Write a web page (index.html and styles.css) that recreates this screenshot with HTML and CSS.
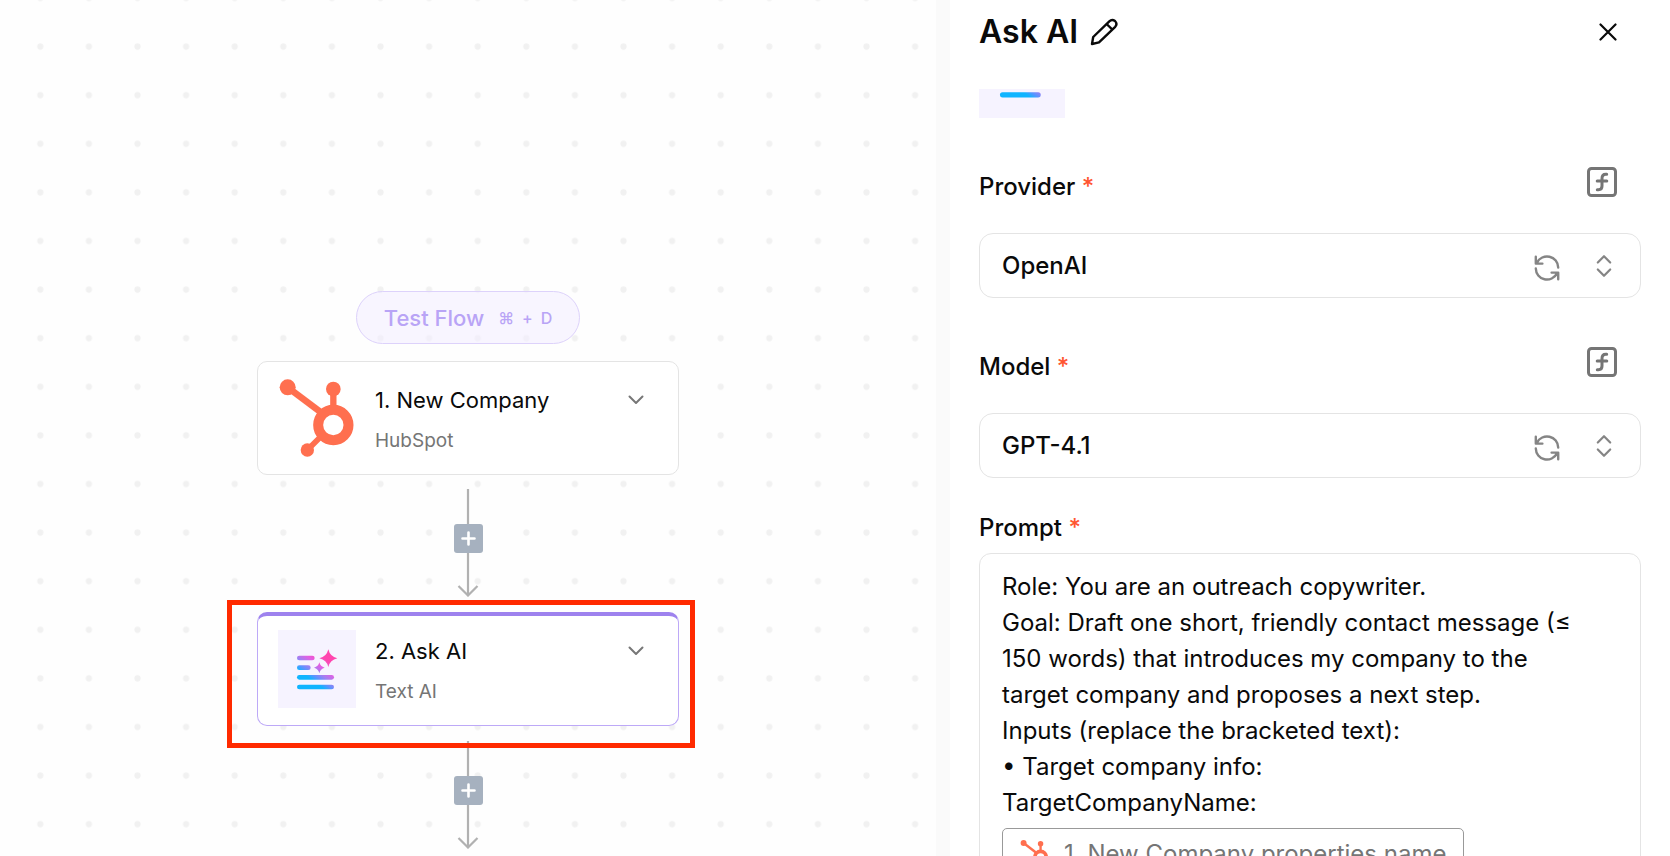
FILE: index.html
```html
<!DOCTYPE html>
<html lang="en">
<head>
  <meta charset="UTF-8" />
  <meta name="viewport" content="width=device-width, initial-scale=1.0"/>
  <title>Flow Builder</title>
  <link rel="stylesheet" href="styles.css">
</head>
<body>
  <!-- Shared icons -->
  <svg class="icon-defs" width="0" height="0" aria-hidden="true">
    <defs>
      <linearGradient id="ai-gradient" gradientUnits="userSpaceOnUse" x1="104" y1="162" x2="149" y2="101">
        <stop offset="0" stop-color="#10b4ff"/>
        <stop offset="0.18" stop-color="#5b93ff"/>
        <stop offset="0.4" stop-color="#a57df0"/>
        <stop offset="0.65" stop-color="#e35fe3"/>
        <stop offset="1" stop-color="#ff45ae"/>
      </linearGradient>
      <symbol id="hubspot" viewBox="24 26 234 234">
        <g fill="none" stroke="#ff6f4f">
          <path d="M53 51 L150 124" stroke-width="20"/>
          <path d="M190 57 V110" stroke-width="19"/>
          <path d="M112 239 L152 199" stroke-width="17"/>
          <circle cx="190" cy="164" r="45.5" stroke-width="30"/>
        </g>
        <g fill="#ff6f4f">
          <circle cx="53" cy="51" r="24"/>
          <circle cx="190" cy="56" r="22"/>
          <circle cx="112" cy="239" r="20"/>
        </g>
      </symbol>
      <symbol id="text-ai" viewBox="24 28 234 234">
        <rect x="24" y="28" width="234" height="234" fill="#f6f3ff"/>
        <g fill="url(#ai-gradient)">
          <rect x="81" y="105" width="53" height="14" rx="7"/>
          <rect x="81" y="134" width="41" height="14" rx="7"/>
          <rect x="81" y="163" width="111" height="14" rx="7"/>
          <rect x="81" y="192" width="111" height="14" rx="7"/>
          <path d="M175 86 Q180 108 202 113 Q180 118 175 139 Q170 118 148 113 Q170 108 175 86Z"/>
          <path d="M148 125 Q151 138 164 141 Q151 144 148 158 Q145 144 132 141 Q145 138 148 125Z"/>
        </g>
      </symbol>
      <symbol id="chevron" viewBox="0 0 16 10">
        <path d="M1.5 1.5 L8 8 L14.5 1.5" fill="none" stroke="#777" stroke-width="2" stroke-linecap="round" stroke-linejoin="round"/>
      </symbol>
      <symbol id="function" viewBox="0 0 30 30">
        <g fill="none" stroke="#757575" stroke-linecap="round">
          <rect x="1.5" y="1.5" width="27" height="27" rx="3" stroke-width="3"/>
          <path d="M19.7 7.3 H18.8 Q15 7.3 15 11.5 V19 Q15 22.7 11.5 22.7 H10.3 M10.2 14 H19.8" stroke-width="3"/>
        </g>
      </symbol>
      <symbol id="refresh" viewBox="0 0 26 26">
        <g fill="none" stroke="#858585" stroke-width="2.4" stroke-linecap="round" stroke-linejoin="round">
          <path d="M24.2 12.5 A11.2 11.2 0 0 0 3 7.6 M1.8 1.8 V8.6 H8.4"/>
          <path d="M1.8 13.5 A11.2 11.2 0 0 0 23 18.4 M24.2 24.2 V17.6 H17.6"/>
        </g>
      </symbol>
      <symbol id="updown" viewBox="0 0 16 24">
        <path d="M1.8 8.5 L8 2.2 L14.2 8.5 M1.8 15.5 L8 21.8 L14.2 15.5" fill="none" stroke="#858585" stroke-width="2.2" stroke-linecap="round" stroke-linejoin="round"/>
      </symbol>
      <symbol id="edge" viewBox="0 0 30 108">
        <path d="M15 0 V106 M5.5 97 L15 106.5 L24.5 97" fill="none" stroke="#b1b1b1" stroke-width="2.2"/>
      </symbol>
    </defs>
  </svg>

  <div class="builder">
    <main class="canvas">
      <svg class="dots" aria-hidden="true">
        <pattern id="grid-dots" x="16" y="22.3" width="48.6" height="48.6" patternUnits="userSpaceOnUse">
          <circle cx="24.3" cy="24.3" r="3.1" fill="#f1f1f1"/>
        </pattern>
        <rect width="100%" height="100%" fill="url(#grid-dots)"/>
      </svg>

      <div class="flow">
        <button class="test-btn">
          Test Flow
          <span class="shortcut"><span>⌘</span><span>+</span><span>D</span></span>
        </button>

        <div class="node">
          <svg class="node-icon" aria-hidden="true"><use href="#hubspot"/></svg>
          <div class="node-text">
            <div class="node-title">1. New Company</div>
            <div class="node-app">HubSpot</div>
          </div>
          <button class="node-menu" aria-label="New Company options">
            <svg width="16" height="10"><use href="#chevron"/></svg>
          </button>
        </div>

        <div class="edge">
          <svg width="30" height="108" aria-hidden="true"><use href="#edge"/></svg>
          <button class="add-btn" aria-label="Add step">
            <svg width="15" height="15"><path d="M7.5 1.5 V13.5 M1.5 7.5 H13.5" stroke="#fff" stroke-width="2.6" stroke-linecap="round"/></svg>
          </button>
        </div>

        <div class="node active">
          <svg class="node-icon" aria-hidden="true"><use href="#text-ai"/></svg>
          <div class="node-text">
            <div class="node-title">2. Ask AI</div>
            <div class="node-app">Text AI</div>
          </div>
          <button class="node-menu" aria-label="Ask AI options">
            <svg width="16" height="10"><use href="#chevron"/></svg>
          </button>
          <div class="highlight"></div>
        </div>

        <div class="edge">
          <svg width="30" height="108" aria-hidden="true"><use href="#edge"/></svg>
          <button class="add-btn" aria-label="Add step">
            <svg width="15" height="15"><path d="M7.5 1.5 V13.5 M1.5 7.5 H13.5" stroke="#fff" stroke-width="2.6" stroke-linecap="round"/></svg>
          </button>
        </div>
      </div>
    </main>

    <aside class="panel">
      <header class="panel-header">
        <h1>Ask AI</h1>
        <button class="icon-btn" aria-label="Rename step">
          <svg width="28" height="28" viewBox="0 0 28 28" fill="none" stroke="#0a0a0a" stroke-width="2.4" stroke-linejoin="round">
            <path d="M2 26 L3.2 19 L19.3 3.3 Q22 .8 25 3 Q27.8 5.8 25.2 8.8 L9 24.4 Z"/>
            <path d="M16.6 6 L22.4 11.6"/>
          </svg>
        </button>
        <button class="icon-btn close-btn" aria-label="Close">
          <svg width="18" height="18" viewBox="0 0 18 18" stroke="#0a0a0a" stroke-width="2.2" stroke-linecap="round">
            <path d="M1.5 1.5 L16.5 16.5 M16.5 1.5 L1.5 16.5"/>
          </svg>
        </button>
      </header>

      <form class="panel-form">
        <div class="app-logo">
          <svg width="86" height="86" aria-hidden="true"><use href="#text-ai"/></svg>
        </div>

        <div class="field">
          <div class="field-head">
            <label for="provider">Provider <span class="required">*</span></label>
            <button type="button" class="icon-btn" aria-label="Use expression for provider">
              <svg width="30" height="30"><use href="#function"/></svg>
            </button>
          </div>
          <div class="select-box">
            <select id="provider">
              <option>OpenAI</option>
            </select>
            <button type="button" class="icon-btn refresh-btn" aria-label="Refresh providers">
              <svg width="26" height="26"><use href="#refresh"/></svg>
            </button>
            <svg width="16" height="24" aria-hidden="true"><use href="#updown"/></svg>
          </div>
        </div>

        <div class="field">
          <div class="field-head">
            <label for="model">Model <span class="required">*</span></label>
            <button type="button" class="icon-btn" aria-label="Use expression for model">
              <svg width="30" height="30"><use href="#function"/></svg>
            </button>
          </div>
          <div class="select-box">
            <select id="model">
              <option>GPT-4.1</option>
            </select>
            <button type="button" class="icon-btn refresh-btn" aria-label="Refresh models">
              <svg width="26" height="26"><use href="#refresh"/></svg>
            </button>
            <svg width="16" height="24" aria-hidden="true"><use href="#updown"/></svg>
          </div>
        </div>

        <div class="field prompt-field">
          <div class="prompt-label" id="prompt-label">Prompt <span class="required">*</span></div>
          <div class="prompt" contenteditable="true" spellcheck="false" role="textbox" aria-multiline="true" aria-labelledby="prompt-label">
            <p>Role: You are an outreach copywriter.</p>
            <p>Goal: Draft one short, friendly contact message (≤ 150 words) that introduces my company to the target company and proposes a next step.</p>
            <p>Inputs (replace the bracketed text):</p>
            <p>• Target company info:</p>
            <p>TargetCompanyName:</p>
            <span class="mention" contenteditable="false">
              <svg width="29" height="29" aria-hidden="true"><use href="#hubspot"/></svg>
              1. New Company properties name
            </span>
          </div>
        </div>
      </form>
    </aside>
  </div>
</body>
</html>
```

FILE: styles.css
```css
* {
  box-sizing: border-box;
}
body {
  margin: 0;
  background: #fff;
  color: #0a0a0a;
  font-family: Inter, 'Liberation Sans', sans-serif;
}
button {
  font-family: inherit;
  cursor: pointer;
}
svg {
  display: block;
  flex-shrink: 0;
}
.icon-defs {
  position: absolute;
}
.builder {
  display: grid;
  grid-template-columns: 95fr 72fr;
  height: 100vh;
  overflow: hidden;
}

/* Canvas */
.canvas {
  position: relative;
  background: #fefefe;
  border-right: 14px solid #fafafa;
  overflow: hidden;
}
.dots {
  position: absolute;
  inset: 0;
  width: 100%;
  height: 100%;
}
.flow {
  position: relative;
  display: flex;
  flex-direction: column;
  align-items: center;
  gap: 15px;
  padding-top: 291px;
}
.test-btn {
  display: flex;
  align-items: center;
  gap: 14px;
  height: 53px;
  padding: 0 27px;
  margin-bottom: 2px;
  background: rgba(243, 238, 255, 0.6);
  border: 1px solid #ddd2fb;
  border-radius: 27px;
  color: #b9a4f6;
  font-size: 22px;
  font-weight: 500;
}
.shortcut {
  display: flex;
  gap: 8px;
  font-size: 16px;
}
.node {
  position: relative;
  z-index: 1;
  display: flex;
  align-items: flex-start;
  width: 422px;
  height: 114px;
  margin-bottom: -1px;
  padding: 17px 34px 0 20px;
  background: #fff;
  border: 1px solid #e4e4e4;
  border-radius: 10px;
}
.node.active {
  margin-bottom: 0;
  padding-top: 14px;
  border-color: #bda9f7;
  border-top: 4px solid #9e82ee;
}
.node-icon {
  width: 78px;
  height: 78px;
}
.node-text {
  flex: 1;
  padding-top: 6px;
  padding-left: 19px;
}
.node-title {
  font-size: 22px;
  line-height: 30px;
  margin-bottom: 11px;
}
.node-app {
  color: #757575;
  font-size: 19px;
  line-height: 30px;
}
.node-menu {
  margin-top: 16px;
  padding: 0;
  background: none;
  border: none;
}
.highlight {
  position: absolute;
  top: -16px;
  right: -17px;
  bottom: -23px;
  left: -31px;
  border: 5px solid #ff2a00;
  pointer-events: none;
}
.edge {
  display: grid;
  justify-items: center;
}
.edge > * {
  grid-area: 1 / 1;
}
.add-btn {
  display: flex;
  align-items: center;
  justify-content: center;
  width: 29px;
  height: 29px;
  margin-top: 35px;
  padding: 0;
  background: #a6b1bf;
  border: none;
  border-radius: 3px;
}

/* Settings panel */
.panel {
  display: flex;
  flex-direction: column;
  min-width: 0;
  padding: 0 29px;
  overflow: hidden;
}
.panel-header {
  display: flex;
  flex-shrink: 0;
  align-items: center;
  height: 63px;
}
.panel-header h1 {
  margin: 0 12px 0 0;
  font-size: 32px;
  font-weight: 600;
}
.icon-btn {
  padding: 0;
  background: none;
  border: none;
}
.close-btn {
  margin-left: auto;
  margin-right: 24px;
}
.panel-form {
  padding-top: 26px;
}
.app-logo {
  display: flex;
  align-items: flex-end;
  height: 29px;
  overflow: hidden;
}
.field {
  margin-top: 49px;
}
.field-head {
  display: flex;
  align-items: flex-start;
  justify-content: space-between;
  padding-right: 24px;
}
.field-head label,
.prompt-label {
  font-size: 24px;
  font-weight: 500;
  line-height: 40px;
}
.required {
  color: #ff5630;
}
.select-box {
  display: flex;
  align-items: center;
  height: 65px;
  margin-top: 26px;
  padding-right: 28px;
  border: 1px solid #e4e4e4;
  border-radius: 14px;
}
.select-box select {
  flex: 1;
  min-width: 0;
  height: 100%;
  padding: 0 22px;
  appearance: none;
  background: none;
  border: none;
  color: inherit;
  font-family: inherit;
  font-size: 24px;
  font-weight: 500;
}
.refresh-btn {
  margin-top: 5px;
  margin-right: 36px;
}
.prompt-field {
  margin-top: 30px;
}
.prompt {
  margin-top: 5px;
  padding: 15px 44px 15px 22px;
  border: 1px solid #e4e4e4;
  border-radius: 12px;
  font-size: 24px;
  line-height: 36px;
  outline: none;
}
.prompt p {
  margin: 0;
}
.mention {
  display: inline-flex;
  align-items: center;
  gap: 15px;
  margin-top: 7px;
  padding: 7px 17px;
  border: 1px solid #999;
  border-radius: 5px;
  color: #757575;
}
```
